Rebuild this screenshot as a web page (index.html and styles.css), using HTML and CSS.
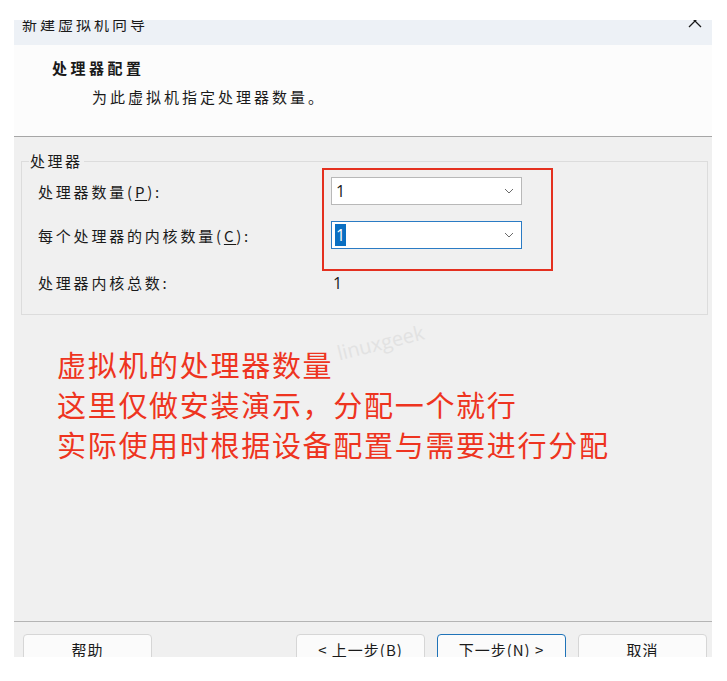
FILE: index.html
```html
<!DOCTYPE html>
<html lang="zh-CN">
<head>
    <meta charset="UTF-8">
    <meta name="viewport" content="width=device-width, initial-scale=1.0">
    <title>新建虚拟机向导</title>
    <link rel="stylesheet" href="styles.css">
</head>
<body>
    <div class="page">
        <div class="dialog">
            <div class="titlebar">
                <span class="title">新建虚拟机向导</span>
                <svg class="close" width="16" height="16" viewBox="0 0 16 16">
                    <path d="M2 2 L14 14 M14 2 L2 14" stroke="#1a1a1a" stroke-width="1.3" fill="none"/>
                </svg>
            </div>

            <div class="header">
                <div class="heading">处理器配置</div>
                <div class="subtitle">为此虚拟机指定处理器数量。</div>
            </div>

            <div class="content">
                <fieldset class="group">
                    <legend>处理器</legend>
                    <div class="rows">
                        <label class="lbl">处理器数量(<u>P</u>):</label>
                        <div class="combo">
                            <span class="val">1</span>
                            <svg class="chev" width="10" height="6" viewBox="0 0 10 6"><path d="M1 1 L5 5 L9 1" stroke="#6b6b6b" stroke-width="1" fill="none"/></svg>
                        </div>

                        <label class="lbl">每个处理器的内核数量(<u>C</u>):</label>
                        <div class="combo focused">
                            <span class="val sel">1</span>
                            <svg class="chev" width="10" height="6" viewBox="0 0 10 6"><path d="M1 1 L5 5 L9 1" stroke="#6b6b6b" stroke-width="1" fill="none"/></svg>
                        </div>

                        <div class="lbl last">处理器内核总数:</div>
                        <div class="total last">1</div>

                        <div class="mark"></div>
                    </div>
                </fieldset>

                <div class="note">
                    <p>虚拟机的处理器数量</p>
                    <p>这里仅做安装演示，分配一个就行</p>
                    <p>实际使用时根据设备配置与需要进行分配</p>
                </div>

                <div class="watermark">linuxgeek</div>
            </div>

            <div class="footer">
                <button class="btn">帮助</button>
                <div class="spacer"></div>
                <button class="btn">&lt; 上一步(B)</button>
                <button class="btn primary">下一步(N) &gt;</button>
                <button class="btn">取消</button>
            </div>
        </div>
    </div>
</body>
</html>
```

FILE: styles.css
```css
body {
    margin: 0;
    background: #ffffff;
    font-family: "Noto Sans CJK SC", "Noto Sans", sans-serif;
    color: #1a1a1a;
}
.page {
    padding: 20px 15px 0 14px;
}
.dialog {
    height: 637px;
    display: flex;
    flex-direction: column;
    overflow: hidden;
    background: #f0f0f0;
}
.titlebar {
    height: 25px;
    flex-shrink: 0;
    display: flex;
    justify-content: space-between;
    align-items: flex-start;
    padding: 0 9px 0 8px;
    background: #edf1f6;
}
.title {
    margin-top: -6px;
    font-size: 15px;
    line-height: 20px;
    letter-spacing: 3px;
}
.close {
    margin-top: -7px;
}
.header {
    height: 78px;
    flex-shrink: 0;
    background: #fcfcfc;
    border-bottom: 1px solid #a6a6a6;
    padding: 13px 0 0 38px;
}
.heading {
    font-size: 15px;
    font-weight: bold;
    line-height: 20px;
    letter-spacing: 3.5px;
}
.subtitle {
    margin: 9px 0 0 40px;
    font-size: 15px;
    line-height: 20px;
    letter-spacing: 3px;
}
.content {
    flex: 1;
    position: relative;
    padding: 15px 4px 0 7px;
}
.group {
    margin: 0;
    padding: 0 0 21px 0;
    border: 1px solid #dcdcdc;
}
.group legend {
    margin-left: 7px;
    padding: 0 1px;
    font-size: 15px;
    line-height: 18px;
    letter-spacing: 2.5px;
}
.rows {
    position: relative;
    display: grid;
    grid-template-columns: 293px 191px;
    grid-template-rows: 28px 28px 28px;
    row-gap: 16px;
    padding: 7px 0 0 16px;
    align-items: center;
}
.lbl {
    font-size: 15px;
    letter-spacing: 2.8px;
    line-height: 20px;
    margin-top: 2px;
}
.lbl u {
    text-underline-offset: 2px;
}
.last {
    margin-top: 8px;
}
.combo {
    height: 28px;
    box-sizing: border-box;
    display: flex;
    align-items: center;
    justify-content: space-between;
    padding: 0 7px 0 3px;
    background: #ffffff;
    border: 1px solid #b8b8b8;
}
.combo.focused {
    border-color: #2a7bc4;
}
.val {
    font-family: "Open Sans", sans-serif;
    font-size: 16px;
    line-height: 22px;
    padding: 0 1px;
}
.val.sel {
    background: #0a6fc2;
    color: #ffffff;
}
.total {
    font-family: "Open Sans", sans-serif;
    font-size: 16px;
    padding-left: 2px;
}
.mark {
    position: absolute;
    left: 300px;
    top: -2px;
    width: 231px;
    height: 103px;
    box-sizing: border-box;
    border: 2.5px solid #e4301f;
}
.note {
    margin: 29px 0 0 36px;
    color: #ee3420;
    font-size: 29px;
    letter-spacing: 1.7px;
    line-height: 40px;
}
.note p {
    margin: 0;
}
.watermark {
    position: absolute;
    left: 322px;
    top: 192px;
    transform: rotate(-14deg);
    font-family: "Open Sans", sans-serif;
    font-size: 20px;
    color: #e2e2e2;
}
.footer {
    height: 36px;
    flex-shrink: 0;
    box-sizing: border-box;
    display: flex;
    align-items: flex-start;
    gap: 12px;
    padding: 12px 5px 0 9px;
    border-top: 1px solid #b4b4b4;
    overflow: hidden;
}
.spacer {
    flex: 1;
}
.btn {
    flex-shrink: 0;
    width: 129px;
    height: 32px;
    padding: 0 0 2px;
    background: #fbfbfb;
    border: 1px solid #d6d6d6;
    border-radius: 4px;
    font-family: "Noto Sans CJK SC", "Noto Sans", sans-serif;
    font-size: 15px;
    color: #1a1a1a;
    letter-spacing: 1px;
}
.btn.primary {
    border-color: #1f73b8;
}
```
